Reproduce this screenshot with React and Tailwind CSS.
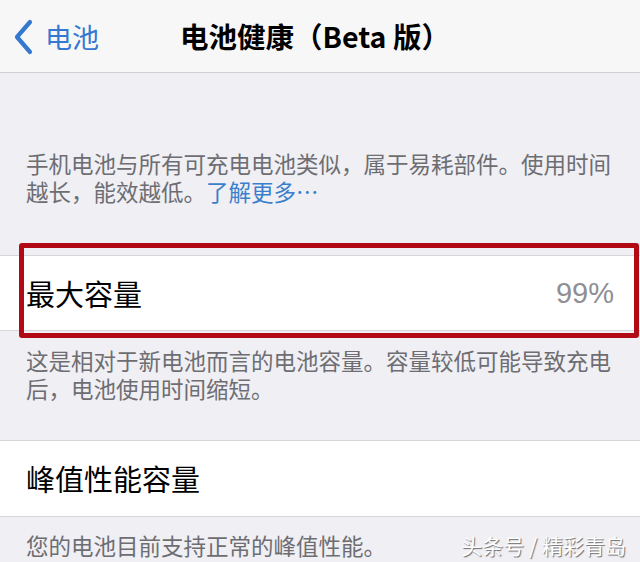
export default function App() {
  return (
    <div className="relative w-[640px] h-[562px] overflow-hidden bg-[#efeff4] font-['Noto_Sans_CJK_SC','Noto_Sans',sans-serif]">
      {/* Nav bar */}
      <div className="h-[73px] bg-[#f7f7f7] border-b border-[#d0d0d4] grid grid-cols-[1fr_auto_1fr] items-center">
        <div className="flex items-center pl-[13px] text-[#3478d0]">
          <svg width="20" height="36" viewBox="0 0 20 36" className="mt-[2px]">
            <polyline points="17,3 4,18 17,33" fill="none" stroke="#3478d0" strokeWidth="4.2" strokeLinecap="round" strokeLinejoin="round" />
          </svg>
          <span className="ml-[12px] text-[27px] leading-none">电池</span>
        </div>
        <div className="pr-[10px] text-[28.5px] font-semibold text-black leading-none">电池健康（Beta 版）</div>
        <div />
      </div>

      {/* Intro paragraph */}
      <div className="pt-[76px] pl-[26px] pr-[14px] text-[22.5px] leading-[28px] text-[#6d6d72]">
        <div>手机电池与所有可充电电池类似，属于易耗部件。使用时间</div>
        <div className="flex">
          <span>越长，能效越低。</span>
          <span className="text-[#3a7fcc]">了解更多…</span>
        </div>
      </div>

      {/* Max capacity row */}
      <div className="relative mt-[50px]">
        <div className="h-[76px] bg-white border-y border-[#d6d6da] flex items-center justify-between pl-[26px] pr-[26px]">
          <span className="text-[29px] text-black leading-none">最大容量</span>
          <span className="text-[29px] text-[#8e8e93] leading-none font-['Liberation_Sans',sans-serif]">99%</span>
        </div>
        <div className="absolute left-[19px] right-[1px] top-[-12px] bottom-[-7px] border-[5px] border-[#b10a15] rounded-[3px]" />
      </div>

      {/* Description */}
      <div className="pt-[15px] pl-[26px] pr-[14px] text-[22.5px] leading-[28px] text-[#6d6d72]">
        <div>这是相对于新电池而言的电池容量。容量较低可能导致充电</div>
        <div>后，电池使用时间缩短。</div>
      </div>

      {/* Peak performance row */}
      <div className="mt-[38px] h-[77px] bg-white border-y border-[#d6d6da] flex items-center pl-[26px]">
        <span className="text-[29px] text-black leading-none">峰值性能容量</span>
      </div>

      <div className="pt-[14px] pl-[26px] text-[22.5px] leading-[28px] text-[#6d6d72]">
        您的电池目前支持正常的峰值性能。
      </div>

      {/* Watermark */}
      <div className="absolute right-[14px] top-[531px] text-[21px] leading-[28px] text-white [text-shadow:1px_1px_1px_rgba(0,0,0,0.55)]">
        头条号 / 精彩青岛
      </div>
    </div>
  );
}
